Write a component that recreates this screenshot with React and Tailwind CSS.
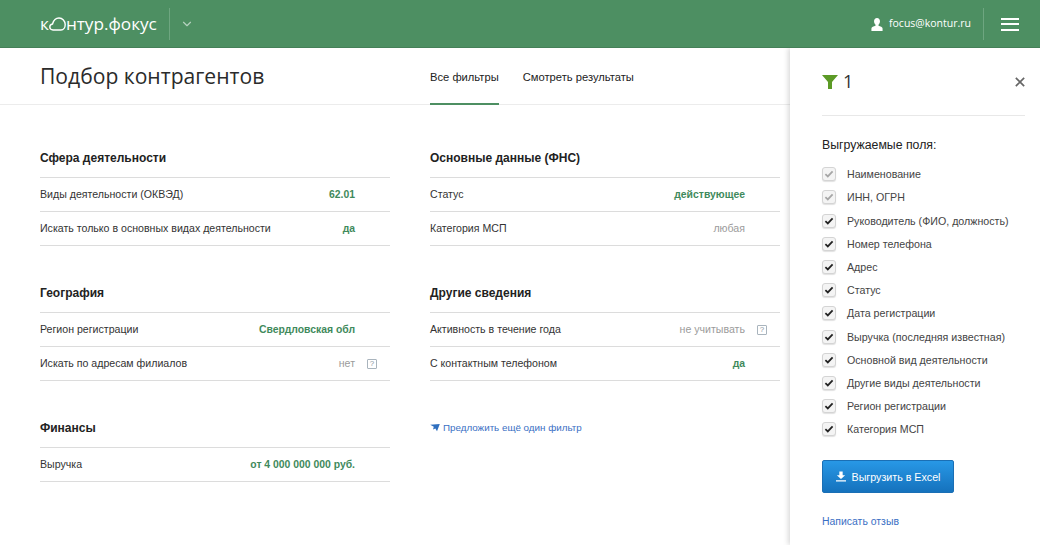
import { ChevronDown } from 'lucide-react';

const leftSections = [
  {
    title: 'Сфера деятельности',
    rows: [
      { label: 'Виды деятельности (ОКВЭД)', value: '62.01', active: true },
      { label: 'Искать только в основных видах деятельности', value: 'да', active: true },
    ],
  },
  {
    title: 'География',
    rows: [
      { label: 'Регион регистрации', value: 'Свердловская обл', active: true },
      { label: 'Искать по адресам филиалов', value: 'нет', help: true },
    ],
  },
  {
    title: 'Финансы',
    rows: [{ label: 'Выручка', value: 'от 4 000 000 000 руб.', active: true }],
  },
];

const rightSections = [
  {
    title: 'Основные данные (ФНС)',
    rows: [
      { label: 'Статус', value: 'действующее', active: true },
      { label: 'Категория МСП', value: 'любая' },
    ],
  },
  {
    title: 'Другие сведения',
    rows: [
      { label: 'Активность в течение года', value: 'не учитывать', help: true },
      { label: 'С контактным телефоном', value: 'да', active: true },
    ],
  },
];

const fields = [
  'Наименование',
  'ИНН, ОГРН',
  'Руководитель (ФИО, должность)',
  'Номер телефона',
  'Адрес',
  'Статус',
  'Дата регистрации',
  'Выручка (последняя известная)',
  'Основной вид деятельности',
  'Другие виды деятельности',
  'Регион регистрации',
  'Категория МСП',
];

function HelpIcon() {
  return (
    <span className="flex h-[10px] w-[10px] items-center justify-center rounded-[1px] border border-[#a9b4bd] text-[8px] leading-none text-[#8a97a1]">
      ?
    </span>
  );
}

function FilterRow({ row }) {
  return (
    <div className="flex h-[34px] items-center border-b border-[#dcdcdc]">
      <span className="min-w-0 flex-1 text-[10.6px] text-[#333]">{row.label}</span>
      <span className={row.active ? 'text-[10.4px] font-bold text-[#3f8a5c]' : 'text-[10.6px] text-[#9b9b9b]'}>
        {row.value}
      </span>
      <span className="flex w-[35px] justify-end pr-[13px]">{row.help && <HelpIcon />}</span>
    </div>
  );
}

function FilterSection({ section }) {
  return (
    <section className="mb-[36px]">
      <h3 className="flex h-[21px] items-center text-[12px] font-bold text-[#222]">{section.title}</h3>
      <div className="mt-[9px] border-t border-[#dcdcdc]">
        {section.rows.map((row) => (
          <FilterRow key={row.label} row={row} />
        ))}
      </div>
    </section>
  );
}

function FieldCheck({ label, disabled }) {
  return (
    <label className="flex h-[23.2px] items-center gap-[11px] text-[10.67px] text-[#444]">
      <span className="flex h-[14px] w-[14px] items-center justify-center rounded-[3px] border border-[#d4d4d4] bg-[#f4f4f4] shadow-[0_1px_1px_rgba(0,0,0,0.12)]">
        <svg viewBox="0 0 12 10" className="h-[8px] w-[10px]">
          <path
            d="M1.5 5.2 4.5 8 10.5 1.8"
            fill="none"
            stroke={disabled ? '#a6a6a6' : '#222'}
            strokeWidth="2.2"
          />
        </svg>
      </span>
      {label}
    </label>
  );
}

export default function App() {
  return (
    <div className="flex h-[545px] w-[1040px] flex-col overflow-hidden bg-white font-['Liberation_Sans',sans-serif] text-[11px]">
      <header className="z-20 flex h-[48px] shrink-0 items-center bg-[#4d8f62] pl-[40px] text-white shadow-[inset_0_-1px_0_rgba(0,0,0,0.1)]">
        <div className="flex items-center font-['Open_Sans',sans-serif] text-[17.2px] leading-none">
          <span>к</span>
          <svg viewBox="0 0 17 14" className="h-[14px] w-[17px]">
            <path
              d="M4 13C2 13 .8 11.500 .8 10 .8 8.300 2 7.200 3.500 7 4.500 3.500 7 1 10 1c3.500 0 6.200 3 6.200 6.500 0 3-1.700 5.500-4.200 5.500z"
              fill="none"
              stroke="#fff"
              strokeWidth="1.4"
            />
          </svg>
          <span>нтур.фокус</span>
        </div>
        <div className="ml-[12px] flex h-[32px] items-center border-l border-[#6ea680] pl-[10px]">
          <ChevronDown size={14} strokeWidth={2} className="text-[#b5d1bf]" />
        </div>
        <div className="ml-auto flex items-center gap-[5px] font-['Open_Sans',sans-serif] text-[10.5px]">
          <svg viewBox="0 0 14 14" className="h-[13px] w-[14px]" fill="#fff">
            <path d="M7 0c2 0 3.200 1.500 3.200 3.600 0 1.600-.7 3-1.600 3.700v1c2 .6 4.400 1.300 4.400 3v2.700H1v-2.700c0-1.700 2.400-2.400 4.400-3v-1C4.500 6.600 3.800 5.200 3.800 3.600 3.800 1.500 5 0 7 0z" />
          </svg>
          focus@kontur.ru
        </div>
        <div className="ml-[12px] flex h-[32px] w-[57px] flex-col items-center justify-center gap-[3.5px] border-l border-[#6ea680] pr-[4px]">
          <span className="h-[2px] w-[18px] bg-white" />
          <span className="h-[2px] w-[18px] bg-white" />
          <span className="h-[2px] w-[18px] bg-white" />
        </div>
      </header>

      <div className="flex min-h-0 flex-1">
        <main className="min-w-0 flex-1">
          <div className="flex h-[57px] border-b border-[#ececec] pl-[40px]">
            <h1 className="w-[390px] pt-[13px] font-['Open_Sans',sans-serif] text-[21.1px] leading-[30px] text-[#2b2b2b]">
              Подбор контрагентов
            </h1>
            <nav className="flex gap-[24px] text-[11.2px] text-[#222]">
              <span className="-mb-px h-[57px] border-b-2 border-[#4d8f62] pt-[21px]">Все фильтры</span>
              <span className="pt-[21px]">Смотреть результаты</span>
            </nav>
          </div>
          <div className="flex gap-[40px] pl-[40px] pt-[42px]">
            <div className="w-[350px]">
              {leftSections.map((section) => (
                <FilterSection key={section.title} section={section} />
              ))}
            </div>
            <div className="w-[350px]">
              {rightSections.map((section) => (
                <FilterSection key={section.title} section={section} />
              ))}
              <a className="flex h-[22px] items-center gap-[3px] text-[9.8px] text-[#3a6fc4]">
                <svg viewBox="0 0 12 10" className="h-[8px] w-[10px]" fill="#2f6fbf">
                  <path d="M0 1 12 0 8.500 9 6.500 5.500 3.500 7 4.500 3.500z" />
                </svg>
                Предложить ещё один фильтр
              </a>
            </div>
          </div>
        </main>

        <aside className="z-10 flex w-[250px] shrink-0 flex-col pl-[32px] pr-[15px] shadow-[-2px_0_5px_rgba(0,0,0,0.15)]">
          <div className="flex h-[68px] shrink-0 items-center border-b border-[#e8e8e8]">
            <svg viewBox="0 0 16 14" className="h-[14px] w-[16px]" fill="#5c9a26">
              <path d="M0 0h16L10 7v7H6V7z" />
            </svg>
            <span className="ml-[5px] font-['Open_Sans',sans-serif] text-[18px] text-[#333]">1</span>
            <svg viewBox="0 0 12 12" className="ml-auto h-[10px] w-[10px]">
              <path d="M1 1l10 10M11 1 1 11" stroke="#666" strokeWidth="2" fill="none" />
            </svg>
          </div>
          <h2 className="mt-[19px] flex h-[20px] items-center text-[12.3px] text-[#222]">Выгружаемые поля:</h2>
          <div className="mt-[7.6px]">
            {fields.map((field, index) => (
              <FieldCheck key={field} label={field} disabled={index < 2} />
            ))}
          </div>
          <button className="mt-[19.4px] flex h-[33px] w-[132px] items-center justify-center gap-[6px] rounded-[2px] border border-[#1a6fb5] bg-gradient-to-b from-[#2898e6] to-[#1572bd] text-[10.7px] text-white">
            <svg viewBox="0 0 12 12" className="h-[11px] w-[10px]" fill="#fff">
              <path d="M4 0h4v4.500h3L6 9 1 4.500h3zM0 10.500h12V12H0z" />
            </svg>
            Выгрузить в Excel
          </button>
          <a className="mt-[21px] text-[10.45px] text-[#3a6fc4]">Написать отзыв</a>
        </aside>
      </div>
    </div>
  );
}
